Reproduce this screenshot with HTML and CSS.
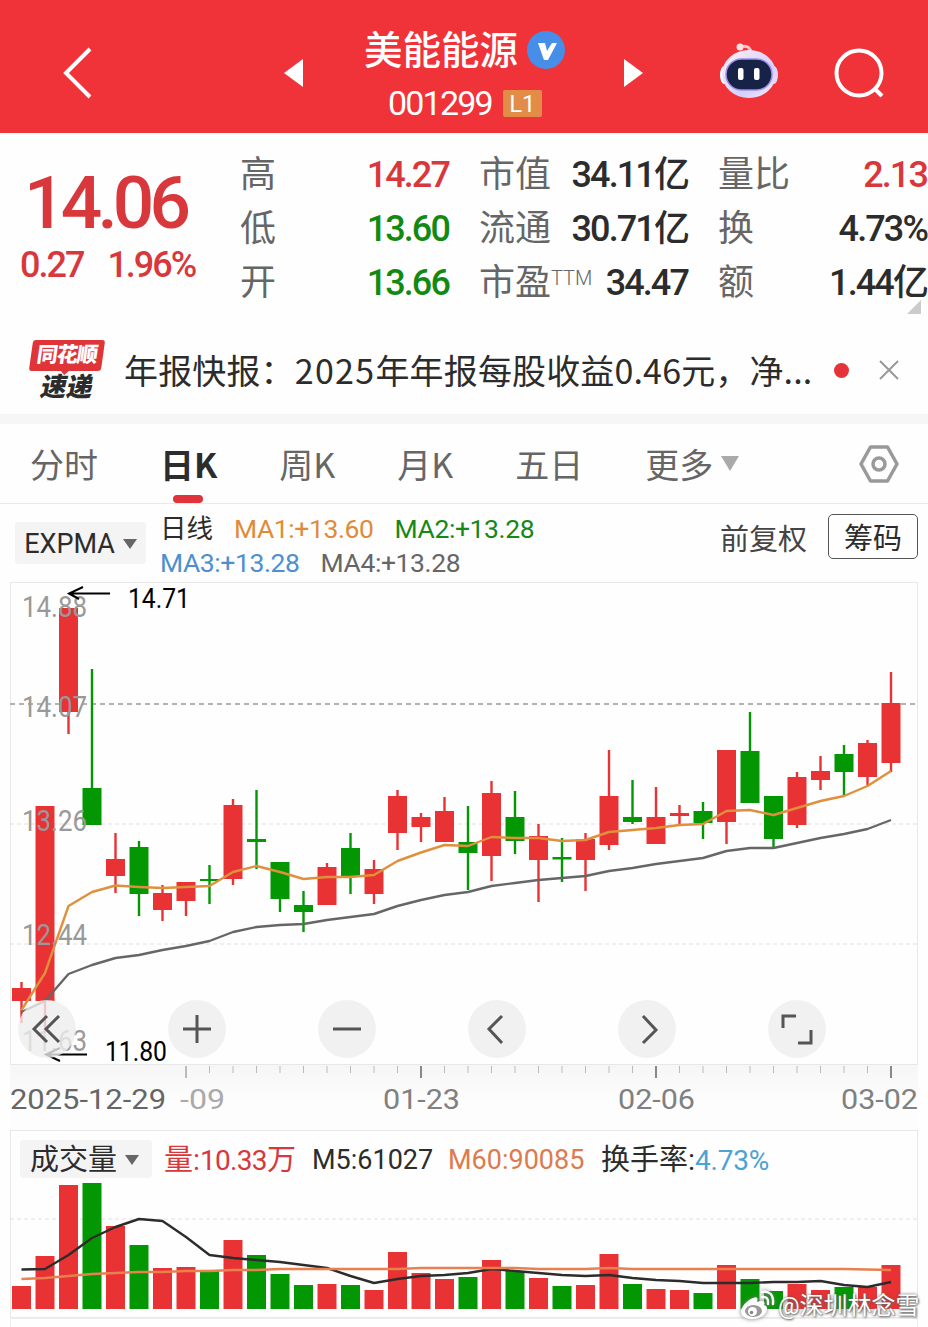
FILE: index.html
```html
<!DOCTYPE html>
<html lang="zh-CN">
<head>
    <meta charset="UTF-8">
    <meta name="viewport" content="width=device-width, initial-scale=1.0">
    <title>美能能源 001299</title>
    <link rel="stylesheet" href="styles.css">
</head>
<body>
    <header class="header">
        <svg class="back" width="36" height="56" viewBox="0 0 36 56"><path d="M30 4L6 28L30 52"/></svg>
        <svg class="prev" width="20" height="30" viewBox="0 0 20 30"><path d="M19 1V29L0 15Z"/></svg>
        <div class="title">
            <div class="name">美能能源
                <svg width="38" height="38" viewBox="0 0 38 38"><circle cx="19" cy="19" r="19" fill="#478ee8"/><path d="M11 12H18L20 20L25 12H30L21 29H17Z" fill="#fff"/></svg>
            </div>
            <div class="code">001299<span class="level">L1</span></div>
        </div>
        <svg class="next" width="20" height="30" viewBox="0 0 20 30"><path d="M1 1V29L20 15Z"/></svg>
        <svg class="robot" width="60" height="58" viewBox="0 0 60 58">
            <defs>
                <linearGradient id="shell" x1="0" y1="0" x2="1" y2="1">
                    <stop offset="0" stop-color="#fff0f4"/>
                    <stop offset=".65" stop-color="#d5cffd"/>
                    <stop offset="1" stop-color="#f8efff"/>
                </linearGradient>
            </defs>
            <path d="M21 5Q30 2 32 10" fill="none" stroke="#fbc5cd" stroke-width="3"/>
            <circle cx="21" cy="5" r="3.5" fill="#ffe1e4"/>
            <ellipse cx="5" cy="33" rx="4" ry="9" fill="#fff"/>
            <ellipse cx="55" cy="33" rx="4" ry="9" fill="#ded7ff"/>
            <ellipse cx="30" cy="32" rx="27" ry="24" fill="url(#shell)"/>
            <rect x="7" y="17" width="46" height="31" rx="15.500" fill="#162347" stroke="#9a8dec" stroke-width="1.5"/>
            <rect x="19" y="26" width="5.500" height="12" rx="2" fill="#fff"/>
            <rect x="35" y="26" width="5.500" height="12" rx="2" fill="#fff"/>
        </svg>
        <svg class="search" width="52" height="52" viewBox="0 0 52 52"><circle cx="25" cy="25" r="22.5"/><path d="M40 40L48 48"/></svg>
    </header>

    <section class="quote">
        <div class="price">
            <div class="price-now">14.06</div>
            <div class="price-diff"><span>0.27</span><span>1.96%</span></div>
        </div>
        <dl class="stats">
            <div><dt>高</dt><dd class="up">14.27</dd></div>
            <div><dt>低</dt><dd class="down">13.60</dd></div>
            <div><dt>开</dt><dd class="down">13.66</dd></div>
        </dl>
        <dl class="stats">
            <div><dt>市值</dt><dd>34.11亿</dd></div>
            <div><dt>流通</dt><dd>30.71亿</dd></div>
            <div><dt>市盈<sup>TTM</sup></dt><dd>34.47</dd></div>
        </dl>
        <dl class="stats">
            <div><dt>量比</dt><dd class="up">2.13</dd></div>
            <div><dt>换</dt><dd>4.73%</dd></div>
            <div><dt>额</dt><dd>1.44亿</dd></div>
        </dl>
        <i class="corner"></i>
    </section>

    <section class="news">
        <div class="news-logo">
            <div class="news-brand">同花顺</div>
            <div class="news-sub">速递</div>
        </div>
        <p class="news-text">年报快报：<span>2025</span>年年报每股收益0.46元，净...</p>
        <i class="dot"></i>
        <svg class="close" width="22" height="22" viewBox="0 0 22 22"><path d="M2 2L20 20M20 2L2 20"/></svg>
    </section>

    <nav class="tabs">
        <a>分时</a>
        <a class="active">日K</a>
        <a>周K</a>
        <a>月K</a>
        <a>五日</a>
        <a>更多<i class="caret"></i></a>
        <svg class="setting" width="42" height="40" viewBox="0 0 42 40"><path d="M12.500 3H29.500L39 20L29.500 37H12.500L3 20Z"/><circle cx="21" cy="20" r="6"/></svg>
    </nav>

    <section class="indicator">
        <div class="select">EXPMA<i class="caret"></i></div>
        <div class="ma">
            <div><span class="ma-cn">日线</span><span class="ma1">MA1:+13.60</span><span class="ma2">MA2:+13.28</span></div>
            <div><span class="ma3">MA3:+13.28</span><span class="ma4">MA4:+13.28</span></div>
        </div>
        <span class="adjust">前复权</span>
        <span class="chip">筹码</span>
    </section>

    <section class="kline">
        <svg id="kline" width="908" height="483" viewBox="10 582 908 483"></svg>
        <div class="tools">
            <button><svg viewBox="0 0 58 58"><path d="M29 16L16 29L29 42M41 16L28 29L41 42"/></svg></button>
            <button><svg viewBox="0 0 58 58"><path d="M15 29H43M29 15V43"/></svg></button>
            <button><svg viewBox="0 0 58 58"><path d="M15 29H43"/></svg></button>
            <button><svg viewBox="0 0 58 58"><path d="M34 16L21 29L34 43"/></svg></button>
            <button><svg viewBox="0 0 58 58"><path d="M25 16L38 30L25 43"/></svg></button>
            <button><svg viewBox="0 0 58 58"><path d="M15 28V16H28M43 30V43H30"/></svg></button>
        </div>
    </section>
    <svg id="axis" class="axis" width="908" height="65" viewBox="10 1065 908 65"></svg>

    <section class="volume">
        <div class="volume-head">
            <div class="select">成交量<i class="caret"></i></div>
            <span class="vol">量:<b>10.33</b>万</span>
            <span class="m5">M5:61027</span>
            <span class="m60">M60:90085</span>
            <span class="turn">换手率:<b>4.73%</b></span>
        </div>
        <svg id="volume" width="908" height="138" viewBox="10 1180 908 138"></svg>
    </section>
    <div class="next-panel"></div>

    <div class="watermark">
        <svg width="36" height="32" viewBox="0 0 36 32">
            <path d="M13 8C18 6 18 9 17 12C22 10 26 11 24 15C28 16 28 20 25 24C19 31 3 31 1 23C0 18 7 10 13 8Z" fill="#fff"/>
            <ellipse cx="13.500" cy="21" rx="8.500" ry="6" fill="#999"/>
            <circle cx="12.500" cy="21.500" r="4.500" fill="#fff"/>
            <circle cx="11.500" cy="22.500" r="1.800" fill="#888"/>
            <path d="M22 7Q29 6 28 14M22 2Q34 0 33 14" fill="none" stroke="#fff" stroke-width="2.500" stroke-linecap="round"/>
        </svg>
        <span>@深圳林念雪</span>
    </div>

    <script>
        var RED = '#e93234';
        var GREEN = '#039803';

        // 最高, 实体上沿, 实体下沿, 最低, 颜色, 成交量柱顶
        var candles = [
            [982, 988, 1001, 1023, RED, 1286],
            [806, 806, 1001, 1033, RED, 1256],
            [608, 608, 712, 734, RED, 1185],
            [669, 788, 825, 825, GREEN, 1183],
            [833, 859, 876, 893, RED, 1226],
            [841, 847, 894, 916, GREEN, 1245],
            [885, 893, 910, 921, RED, 1268],
            [882, 882, 901, 916, RED, 1267],
            [865, 879, 881, 904, GREEN, 1271],
            [799, 805, 879, 885, RED, 1240],
            [790, 839, 842, 869, GREEN, 1255],
            [862, 862, 899, 912, GREEN, 1274],
            [891, 905, 912, 932, GREEN, 1285],
            [863, 867, 905, 905, RED, 1284],
            [833, 848, 876, 894, GREEN, 1285],
            [860, 869, 894, 904, RED, 1290],
            [790, 796, 833, 850, RED, 1252],
            [813, 817, 827, 842, RED, 1273],
            [797, 811, 842, 842, RED, 1279],
            [806, 842, 853, 890, GREEN, 1277],
            [781, 793, 856, 881, RED, 1260],
            [791, 817, 841, 854, GREEN, 1271],
            [824, 836, 860, 902, RED, 1278],
            [838, 857, 859.5, 882, GREEN, 1286],
            [833, 839, 860, 891, RED, 1285],
            [750, 796, 845, 850, RED, 1254],
            [780, 817, 822, 824, GREEN, 1284],
            [787, 817, 844, 844, RED, 1289],
            [805, 813, 816, 826, RED, 1290],
            [802, 811, 823, 839, GREEN, 1293],
            [750, 750, 822, 844, RED, 1265],
            [712, 751, 803, 803, GREEN, 1279],
            [796, 796, 839, 849, GREEN, 1291],
            [772, 777, 825, 828, RED, 1284],
            [756, 771, 780, 790, RED, 1290],
            [745, 754, 772, 796, GREEN, 1287],
            [740, 743, 777, 785, RED, 1287],
            [672, 703, 763, 772, RED, 1265]
        ];
        var fast = [1010, 973, 906, 892, 885.5, 887, 888, 887, 886, 872, 866, 872, 879, 877, 877, 875, 861, 852.5, 845, 846, 837, 838, 838, 841, 840, 832, 830, 828, 825, 824, 811, 810, 815, 808, 801, 796, 786, 771];
        var slow = [1012, 1001, 974, 965, 958, 955, 950, 946, 941, 932, 927, 925, 924, 920, 917, 914, 906, 900, 895, 892, 886, 883, 880, 878, 876, 871, 868, 864, 861, 858, 851, 848, 848, 843, 838, 834, 829, 820];
        var m5 = [1269.5, 1269, 1255, 1238, 1227, 1219, 1221, 1237, 1255, 1258, 1260, 1262, 1265, 1268, 1276, 1283, 1279, 1276, 1275, 1273, 1269, 1271, 1273, 1275, 1276, 1275, 1278, 1280, 1281, 1283, 1283, 1283, 1282, 1282, 1281, 1285, 1287, 1282];
        var m60 = [1279, 1278, 1276, 1274, 1273, 1272, 1272, 1271, 1271, 1270, 1270, 1269, 1269, 1269, 1269, 1269, 1269, 1268, 1268, 1268, 1268, 1268, 1269, 1269, 1269, 1268, 1269, 1269, 1269, 1269, 1269, 1269, 1269, 1269, 1269, 1269, 1269.5, 1270];

        function x(i) {
            return 21.5 + i * 23.5;
        }
        function rect(left, top, width, height, color) {
            return '<rect x="' + left + '" y="' + top + '" width="' + width + '" height="' + height + '" fill="' + color + '"/>';
        }
        function line(list, cls) {
            var points = list.map(function(y, i) {
                return x(i) + ',' + y;
            });
            return '<polyline class="' + cls + '" points="' + points.join(' ') + '"/>';
        }
        function dash(y, cls) {
            return '<path class="' + cls + '" d="M10 ' + y + 'H917"/>';
        }
        function text(str, left, y, width, cls) {
            return '<text class="' + cls + '" x="' + left + '" y="' + y + '" textLength="' + width + '" lengthAdjust="spacingAndGlyphs">' + str + '</text>';
        }

        var k = dash(824, 'grid') + dash(944, 'grid') + dash(704, 'grid-now');
        var v = dash(1219, 'grid');
        candles.forEach(function(c, i) {
            k += rect(x(i) - 1.2, c[0], 2.4, c[3] - c[0], c[4]);
            k += rect(x(i) - 9.5, c[1], 19, c[2] - c[1], c[4]);
            v += rect(x(i) - 9.5, c[5], 19, 1309 - c[5], c[4]);
        });
        k += line(slow, 'line-slow') + line(fast, 'line-fast');
        k += text('14.88', 22, 617, 65, 'scale') + text('14.07', 22, 717, 65, 'scale') + text('13.26', 22, 831, 65, 'scale');
        k += text('12.44', 22, 945, 65, 'scale') + text('11.63', 22, 1051, 65, 'scale');
        k += '<path class="arrow" d="M110 593.500H69M83 587L69 593.500L79 599M87 1054.500H46M60 1048L46 1054.500L60 1061"/>';
        k += text('14.71', 128, 608, 62, 'mark') + text('11.80', 105, 1061, 62, 'mark');
        document.getElementById('kline').innerHTML = k;
        document.getElementById('volume').innerHTML = v + line(m5, 'line-m5') + line(m60, 'line-m60');

        var a = '';
        for (var i = 7; i < 38; i++) {
            var major = i % 10 === 7;
            a += rect(x(i) - (major ? 1 : .5), 1066, major ? 2 : 1, major ? 12 : 7, major && i > 7 ? '#888' : '#bbb');
        }
        a += text('2025-12-29', 10, 1109, 156, 'date first') + text('-09', 180, 1109, 45, 'date faded');
        a += text('01-23', 383, 1109, 77, 'date') + text('02-06', 618, 1109, 77, 'date') + text('03-02', 841, 1109, 77, 'date');
        document.getElementById('axis').innerHTML = a;
    </script>
</body>
</html>
```
FILE: styles.css
```css
* {
    box-sizing: border-box;
    margin: 0;
    padding: 0;
}
body {
    position: relative;
    width: 928px;
    height: 1327px;
    overflow: hidden;
    background: #fefefe;
    color: #2c2c2c;
    font-family: Roboto, "Noto Sans CJK SC", sans-serif;
    line-height: 1;
}
svg {
    display: block;
    flex: none;
    overflow: visible;
}
.up {
    color: #d8383c;
}
.down {
    color: #128a12;
}

/* header */
.header {
    display: flex;
    align-items: center;
    height: 133px;
    padding: 12px 0 0 60px;
    background: #f03239;
    color: #fff;
}
.back, .search {
    fill: none;
    stroke: #fff;
    stroke-width: 4;
}
.prev, .next {
    fill: #fff;
}
.prev {
    margin-left: 188px;
}
.title {
    width: 202px;
    margin-left: 60px;
    padding-top: 9px;
}
.name {
    display: flex;
    align-items: center;
    gap: 9px;
    height: 52px;
    font-size: 38.5px;
    font-weight: 500;
    white-space: nowrap;
}
.name svg {
    margin-bottom: 3px;
}
.code {
    display: flex;
    align-items: center;
    height: 52px;
    margin-left: 24px;
    font-size: 34px;
    letter-spacing: -1.8px;
}
.level {
    width: 39px;
    height: 27px;
    margin-left: 11px;
    border-radius: 2px;
    background: #e38c48;
    font-size: 24px;
    line-height: 28px;
    letter-spacing: 0;
    text-align: center;
}
.next {
    margin-left: 57px;
}
.robot {
    margin-left: 76px;
    margin-bottom: 4px;
}
.search {
    margin-left: 55px;
    margin-top: 2px;
}

/* quote */
.quote {
    position: relative;
    display: flex;
    height: 193px;
    padding-top: 15px;
}
.price {
    width: 240px;
    color: #d8383c;
    font-weight: 500;
}
.price-now {
    height: 89px;
    padding-left: 24px;
    font-size: 73px;
    line-height: 111px;
    letter-spacing: -4.8px;
}
.price-diff {
    display: flex;
    gap: 24px;
    padding-left: 20px;
    font-size: 36px;
    line-height: 57px;
    letter-spacing: -2px;
}
.stats {
    width: 209px;
    margin-right: 30px;
}
.stats:nth-of-type(3) {
    margin-right: 0;
}
.stats div {
    display: flex;
    justify-content: space-between;
    height: 54px;
    line-height: 54px;
    white-space: nowrap;
}
.stats dt {
    color: #666;
    font-size: 36px;
}
.stats sup {
    display: inline-block;
    font-size: 20px;
    font-weight: 300;
    line-height: 1;
    vertical-align: 10px;
}
.stats dd {
    font-size: 36px;
    font-weight: 500;
    letter-spacing: -1.9px;
}
.corner {
    position: absolute;
    right: 7px;
    bottom: 12px;
    border-left: 14px solid transparent;
    border-bottom: 14px solid #ccc;
}

/* news */
.news {
    display: flex;
    align-items: center;
    height: 98px;
    padding-left: 31px;
    border-bottom: 10px solid #f6f6f6;
}
.news-logo {
    width: 72px;
    height: 60px;
    text-align: center;
}
.news-brand {
    position: relative;
    height: 31px;
    border-radius: 3px;
    background: #df3438;
    color: #fff;
    font-size: 21px;
    font-weight: 900;
    line-height: 31px;
    letter-spacing: -1px;
    transform: skewX(-8deg);
}
.news-brand::after {
    content: "";
    position: absolute;
    left: 31px;
    top: 30px;
    border: 5px solid transparent;
    border-top-color: #df3438;
}
.news-sub {
    font-size: 26px;
    font-weight: 900;
    line-height: 33px;
    transform: skewX(-12deg);
}
.news-text {
    width: 700px;
    margin-left: 21px;
    font-family: "Noto Sans CJK SC", sans-serif;
    font-size: 34px;
    letter-spacing: .15px;
    white-space: nowrap;
}
.news-text span {
    letter-spacing: 1.3px;
}
.dot {
    width: 15px;
    height: 15px;
    margin-left: 10px;
    border-radius: 50%;
    background: #e5333a;
}
.close {
    margin-left: 29px;
    fill: none;
    stroke: #999;
    stroke-width: 2;
}

/* tabs */
.tabs {
    display: flex;
    align-items: center;
    gap: 62px;
    height: 80px;
    padding-left: 30px;
    border-bottom: 1px solid #e8e8e8;
    color: #666;
    font-family: "Noto Sans CJK SC", sans-serif;
    font-size: 34px;
}
.tabs a {
    position: relative;
    line-height: 78px;
    white-space: nowrap;
}
.tabs .active {
    color: #2c2c2c;
    font-weight: 700;
}
.active::after {
    content: "";
    position: absolute;
    left: 13px;
    bottom: 0;
    width: 30px;
    height: 8px;
    border-radius: 4px;
    background: #e0343a;
}
.caret {
    display: inline-block;
    border: 7px solid transparent;
    border-top: 10px solid #666;
    border-bottom: 0;
}
.tabs .caret {
    margin-left: 8px;
    border-width: 15px 9px 0;
    border-top-color: #aaa;
    vertical-align: 7px;
}
.setting {
    margin-left: auto;
    margin-right: 28px;
    fill: none;
    stroke: #999;
    stroke-width: 3.5;
    stroke-linejoin: round;
}

/* indicator */
.indicator {
    display: flex;
    height: 78px;
    padding-left: 15px;
}
.select {
    display: flex;
    align-items: center;
    justify-content: center;
    gap: 8px;
    border-radius: 4px;
    background: #f4f4f4;
    font-size: 29px;
}
.indicator .select {
    width: 131px;
    height: 42px;
    margin-top: 18px;
    padding-top: 2px;
    font-size: 27px;
}
.ma {
    width: 560px;
    padding-top: 8px;
    margin-left: 14px;
    font-size: 26.5px;
    line-height: 34px;
    letter-spacing: -.4px;
}
.ma div {
    display: flex;
    gap: 21px;
    height: 34px;
}
.ma-cn {
    letter-spacing: 0;
}
.ma1 {
    color: #df8b39;
}
.ma2 {
    color: #168816;
}
.ma3 {
    color: #4d8fd0;
}
.ma4 {
    color: #666;
}
.adjust {
    width: 88px;
    color: #444;
    font-size: 29px;
    line-height: 73px;
}
.chip {
    width: 90px;
    height: 45px;
    margin: 10px 0 0 20px;
    border: 1px solid #555;
    border-radius: 5px;
    font-size: 29px;
    line-height: 49px;
    text-align: center;
}

/* charts */
.kline {
    position: relative;
    width: 908px;
    height: 483px;
    margin-left: 10px;
    box-shadow: inset 0 0 0 1px #e8e8e8;
}
.tools {
    position: absolute;
    left: 8px;
    top: 418px;
    display: flex;
    gap: 92px;
}
.tools button {
    width: 58px;
    height: 58px;
    border: 0;
    border-radius: 50%;
    background: rgba(238, 238, 238, .8);
}
.tools path {
    fill: none;
    stroke: #555;
    stroke-width: 3;
}
.grid {
    stroke: #e0e0e0;
    stroke-dasharray: 4 3;
}
.grid-now {
    stroke: #999;
    stroke-width: 1.5;
    stroke-dasharray: 5 4;
}
polyline {
    fill: none;
    stroke-width: 2.4;
    stroke-linejoin: round;
}
.line-fast {
    stroke: #e0903c;
}
.line-slow {
    stroke: #666;
}
.line-m5 {
    stroke: #2c2c2c;
}
.line-m60 {
    stroke: #e88050;
}
.scale {
    fill: #999;
    font-size: 29px;
}
.mark {
    fill: #000;
    font-size: 27px;
}
.arrow {
    fill: none;
    stroke: #000;
    stroke-width: 2;
}
.axis {
    margin-left: 10px;
    background: linear-gradient(#f6f6f6, #fdfdfd 60%);
}
.date {
    fill: #808080;
    font-size: 28px;
}
.first {
    fill: #666;
}
.faded {
    fill: #aaa;
}

/* volume */
.volume {
    width: 908px;
    height: 188px;
    margin-left: 10px;
    box-shadow: inset 0 0 0 1px #e8e8e8;
}
.volume-head {
    display: flex;
    height: 50px;
    padding: 10px 0 0 10px;
    font-size: 29px;
    line-height: 41px;
    white-space: nowrap;
}
.volume-head .select {
    width: 132px;
    height: 38px;
    padding: 2px 3px 0 0;
}
.volume-head b {
    font-size: 28px;
    font-weight: 400;
    letter-spacing: -.7px;
}
.vol {
    width: 160px;
    padding-left: 12px;
    color: #d8383c;
}
.m5 {
    width: 136px;
    font-size: 27px;
}
.m60 {
    width: 153px;
    color: #dd7a4e;
    font-size: 27px;
}
.turn b {
    color: #4ba3d4;
    letter-spacing: -.2px;
}
.next-panel {
    width: 908px;
    height: 9px;
    margin-left: 10px;
    border: solid #eee;
    border-width: 1px 1px 0;
}

.watermark {
    position: absolute;
    left: 740px;
    top: 1289px;
    display: flex;
    align-items: center;
    gap: 2px;
    color: #fff;
    font-size: 24px;
    line-height: 34px;
    white-space: nowrap;
    text-shadow: 0 0 3px #555, 1px 1px 2px #777;
}
.watermark svg {
    filter: drop-shadow(0 0 2px #777);
}
```
